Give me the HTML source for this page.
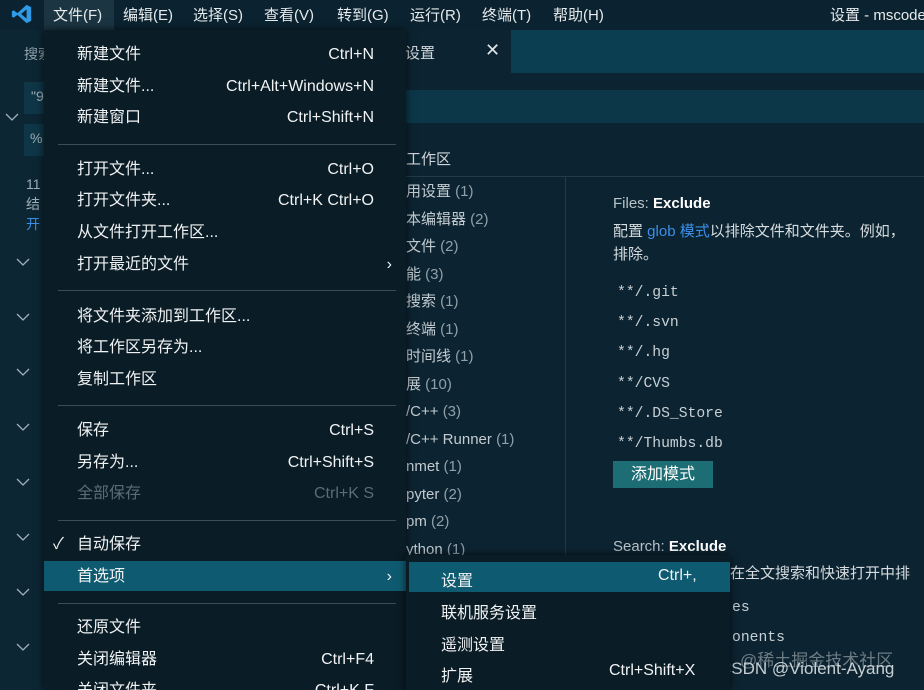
<!DOCTYPE html>
<html><head><meta charset="utf-8"><style>
*{margin:0;padding:0;box-sizing:border-box}
html{width:924px;height:690px;overflow:hidden}
body{width:924px;height:690px;overflow:hidden;background:#0c2431;font-family:"Liberation Sans","Noto Sans CJK SC",sans-serif;color:#d0d6da;position:relative;font-size:15px}
.a{position:absolute;white-space:nowrap}
.mono{font-family:"Liberation Mono","DejaVu Sans Mono",monospace;font-size:14.7px;color:#c8d0d4}
.menu{position:absolute;left:44px;top:30px;width:362px;height:660px;background:#0a1c26;box-shadow:0 0 8px #000a;font-size:16px}
.it{position:absolute;left:0;width:100%;height:31px;line-height:31px;color:#f0f2f3}
.it .l{position:absolute;left:33px}
.it .r{position:absolute;right:32px}
.sep{position:absolute;left:14px;right:10px;height:1px;background:#3a4e58}
.hl{background:#0e5a70}
.dis{color:#5a6c74}
.toc{color:#c3cbd0}.toc span{color:#8fa0a8}
.sub{color:#f0f2f3;font-size:16px}
</style></head><body>
<div class="a" style="left:0;top:0;width:924px;height:30px;background:#0b2330"></div>
<svg class="a" style="left:11px;top:3px" width="22" height="22" viewBox="0 0 24 24"><path d="M17 2 L22 4.5 V19.5 L17 22 L7 13 L3 16 L1 15 V9 L3 8 L7 11 Z M17 7 L11 12 L17 17 Z" fill="#2f9ae6"/></svg>
<div class="a" style="left:44px;top:0;width:70px;height:30px;background:#1b3542"></div>
<div class="a" style="left:53px;top:4px;color:#e6eaec">文件(F)</div>
<div class="a" style="left:123px;top:4px;color:#e6eaec">编辑(E)</div>
<div class="a" style="left:193px;top:4px;color:#e6eaec">选择(S)</div>
<div class="a" style="left:264px;top:4px;color:#e6eaec">查看(V)</div>
<div class="a" style="left:337px;top:4px;color:#e6eaec">转到(G)</div>
<div class="a" style="left:410px;top:4px;color:#e6eaec">运行(R)</div>
<div class="a" style="left:482px;top:4px;color:#e6eaec">终端(T)</div>
<div class="a" style="left:553px;top:4px;color:#e6eaec">帮助(H)</div>
<div class="a" style="left:830px;top:4px;color:#e6eaec">设置 - mscode</div>
<div class="a" style="left:0;top:30px;width:44px;height:660px;background:#0d2633"></div>
<div class="a" style="left:24px;top:44px;color:#8fa0a8;font-size:14px">搜索</div>
<div class="a" style="left:24px;top:82px;width:20px;height:32px;background:#0f3646;color:#9fb0b8;padding:6px 0 0 7px;font-size:14px">"9</div>
<div class="a" style="left:24px;top:124px;width:20px;height:32px;background:#0f3646;color:#9fb0b8;padding:6px 0 0 6px;font-size:14px">%</div>
<svg class="a" style="left:0;top:0" width="44" height="690"><g fill="none" stroke="#9fb0b8" stroke-width="1.3">
<path d="M6 114l6 6 6-6"/><path d="M17 259l6 6 6-6"/><path d="M17 314l6 6 6-6"/><path d="M17 369l6 6 6-6"/><path d="M17 424l6 6 6-6"/><path d="M17 479l6 6 6-6"/><path d="M17 534l6 6 6-6"/><path d="M17 589l6 6 6-6"/><path d="M17 644l6 6 6-6"/></g></svg>
<div class="a" style="left:26px;top:174px;color:#9fb0b8;font-size:14px;line-height:20px">11<br>结<br><span style="color:#3a8ee6">开</span></div>
<div class="a" style="left:406px;top:30px;width:105px;height:43px;background:#0c2431"></div>
<div class="a" style="left:405px;top:42px">设置</div>
<div class="a" style="left:485px;top:40px;font-size:18px;color:#dfe4e6">✕</div>
<div class="a" style="left:511px;top:30px;width:413px;height:43px;background:#0b3e50"></div>
<div class="a" style="left:406px;top:90px;width:518px;height:33px;background:#0c3748"></div>
<div class="a" style="left:406px;top:148px">工作区</div>
<div class="a" style="left:406px;top:176px;width:518px;height:1px;background:#1f3c48"></div>
<div class="a" style="left:565px;top:177px;width:1px;height:380px;background:#1f3c48"></div>
<div class="a toc" style="left:406px;top:178px;line-height:27.5px">
用设置 <span>(1)</span><br>本编辑器 <span>(2)</span><br>文件 <span>(2)</span><br>能 <span>(3)</span><br>搜索 <span>(1)</span><br>终端 <span>(1)</span><br>时间线 <span>(1)</span><br>展 <span>(10)</span><br>/C++ <span>(3)</span><br>/C++ Runner <span>(1)</span><br>nmet <span>(1)</span><br>pyter <span>(2)</span><br>pm <span>(2)</span><br>ython <span>(1)</span></div>
<div class="a" style="left:613px;top:195px;color:#b9c3c8">Files: <b style="color:#fff">Exclude</b></div>
<div class="a" style="left:613px;top:220px;color:#d6dcdf">配置 <span style="color:#3c8ee8">glob 模式</span>以排除文件和文件夹。例如，</div>
<div class="a" style="left:613px;top:243px;color:#d6dcdf">排除。</div>
<div class="a mono" style="left:617px;top:278px;line-height:30.2px">**/.git<br>**/.svn<br>**/.hg<br>**/CVS<br>**/.DS_Store<br>**/Thumbs.db</div>
<div class="a" style="left:613px;top:461px;width:100px;height:27px;background:#1d6e74;color:#fff;text-align:center;line-height:27px;font-size:16px">添加模式</div>
<div class="a" style="left:613px;top:538px;color:#b9c3c8">Search: <b style="color:#fff">Exclude</b></div>
<div class="a" style="left:730px;top:562px;color:#d6dcdf">在全文搜索和快速打开中排</div>
<div class="a mono" style="left:732px;top:600px">es</div>
<div class="a mono" style="left:732px;top:630px">onents</div>
<div class="a" style="left:740px;top:646px;color:#6d7c84;font-size:17px">@稀土掘金技术社区</div>
<div class="a" style="left:719px;top:659px;color:#c8cfd3;font-size:17px">CSDN @Violent-Ayang</div>
<div class="menu">
<div class="it" style="top:9px"><span class="l">新建文件</span><span class="r">Ctrl+N</span></div>
<div class="it" style="top:41px"><span class="l">新建文件...</span><span class="r">Ctrl+Alt+Windows+N</span></div>
<div class="it" style="top:72px"><span class="l">新建窗口</span><span class="r">Ctrl+Shift+N</span></div>
<div class="sep" style="top:114px"></div>
<div class="it" style="top:124px"><span class="l">打开文件...</span><span class="r">Ctrl+O</span></div>
<div class="it" style="top:155px"><span class="l">打开文件夹...</span><span class="r">Ctrl+K Ctrl+O</span></div>
<div class="it" style="top:187px"><span class="l">从文件打开工作区...</span></div>
<div class="it" style="top:219px"><span class="l">打开最近的文件</span><span class="r" style="right:14px">›</span></div>
<div class="sep" style="top:260px"></div>
<div class="it" style="top:271px"><span class="l">将文件夹添加到工作区...</span></div>
<div class="it" style="top:302px"><span class="l">将工作区另存为...</span></div>
<div class="it" style="top:334px"><span class="l">复制工作区</span></div>
<div class="sep" style="top:375px"></div>
<div class="it" style="top:385px"><span class="l">保存</span><span class="r">Ctrl+S</span></div>
<div class="it" style="top:417px"><span class="l">另存为...</span><span class="r">Ctrl+Shift+S</span></div>
<div class="it dis" style="top:448px"><span class="l">全部保存</span><span class="r">Ctrl+K S</span></div>
<div class="sep" style="top:490px"></div>
<div class="it" style="top:499px"><span class="a" style="left:9px">✓</span><span class="l">自动保存</span></div>
<div class="it hl" style="top:531px;height:30px"><span class="l">首选项</span><span class="r" style="right:14px">›</span></div>
<div class="sep" style="top:573px"></div>
<div class="it" style="top:582px"><span class="l">还原文件</span></div>
<div class="it" style="top:614px"><span class="l">关闭编辑器</span><span class="r">Ctrl+F4</span></div>
<div class="it" style="top:645px"><span class="l">关闭文件夹</span><span class="r">Ctrl+K F</span></div>
</div>
<div class="a" style="left:406px;top:555px;width:324px;height:135px;background:#0a1c26;box-shadow:0 0 8px #000a"></div>
<div class="a hl" style="left:409px;top:562px;width:321px;height:30px"></div>
<div class="a sub" style="left:441px;top:567px">设置</div>
<div class="a sub" style="left:658px;top:567px">Ctrl+,</div>
<div class="a sub" style="left:441px;top:599px">联机服务设置</div>
<div class="a sub" style="left:441px;top:631px">遥测设置</div>
<div class="a sub" style="left:441px;top:662px">扩展</div>
<div class="a sub" style="left:609px;top:662px">Ctrl+Shift+X</div>
</body></html>
